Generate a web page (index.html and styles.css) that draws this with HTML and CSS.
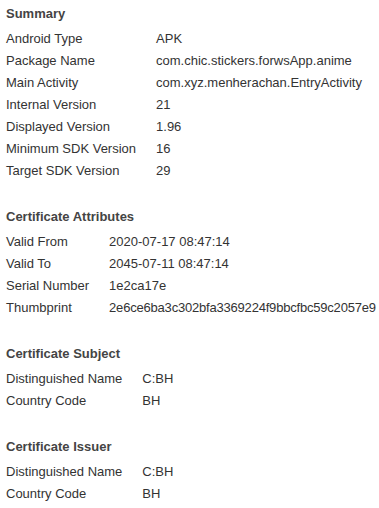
FILE: index.html
```html
<!DOCTYPE html>
<html lang="en">
<head>
    <meta charset="UTF-8">
    <title>APK Details</title>
    <link rel="stylesheet" href="styles.css">
</head>
<body>

    <div class="section">
        <h3>Summary</h3>
        <table class="info">
            <tr><td>Android Type</td><td>APK</td></tr>
            <tr><td>Package Name</td><td>com.chic.stickers.forwsApp.anime</td></tr>
            <tr><td>Main Activity</td><td>com.xyz.menherachan.EntryActivity</td></tr>
            <tr><td>Internal Version</td><td>21</td></tr>
            <tr><td>Displayed Version</td><td>1.96</td></tr>
            <tr><td>Minimum SDK Version</td><td>16</td></tr>
            <tr><td>Target SDK Version</td><td>29</td></tr>
        </table>
    </div>

    <div class="section">
        <h3>Certificate Attributes</h3>
        <table class="info">
            <tr><td>Valid From</td><td>2020-07-17 08:47:14</td></tr>
            <tr><td>Valid To</td><td>2045-07-11 08:47:14</td></tr>
            <tr><td>Serial Number</td><td>1e2ca17e</td></tr>
            <tr><td>Thumbprint</td><td class="hash">2e6ce6ba3c302bfa3369224f9bbcfbc59c2057e9</td></tr>
        </table>
    </div>

    <div class="section">
        <h3>Certificate Subject</h3>
        <table class="info">
            <tr><td>Distinguished Name</td><td>C:BH</td></tr>
            <tr><td>Country Code</td><td>BH</td></tr>
        </table>
    </div>

    <div class="section">
        <h3>Certificate Issuer</h3>
        <table class="info">
            <tr><td>Distinguished Name</td><td>C:BH</td></tr>
            <tr><td>Country Code</td><td>BH</td></tr>
        </table>
    </div>

</body>
</html>
```

FILE: styles.css
```css
body {
    margin: 0;
    padding: 3px 6px 0 6px;
    background: #fff;
    color: #333;
    font-family: "Liberation Sans", Arial, sans-serif;
    font-size: 13px;
}

.section {
    margin-bottom: 24px;
}

.section h3 {
    margin: 0 0 3px 0;
    font-size: 13px;
    line-height: 22px;
    font-weight: bold;
    color: #444;
}

.info {
    border-collapse: collapse;
}

.info td {
    padding: 0;
    height: 22px;
    line-height: 22px;
    white-space: nowrap;
    vertical-align: top;
}

.info td:first-child {
    padding-right: 20px;
}

.info td.hash {
    letter-spacing: -0.2px;
}
```
